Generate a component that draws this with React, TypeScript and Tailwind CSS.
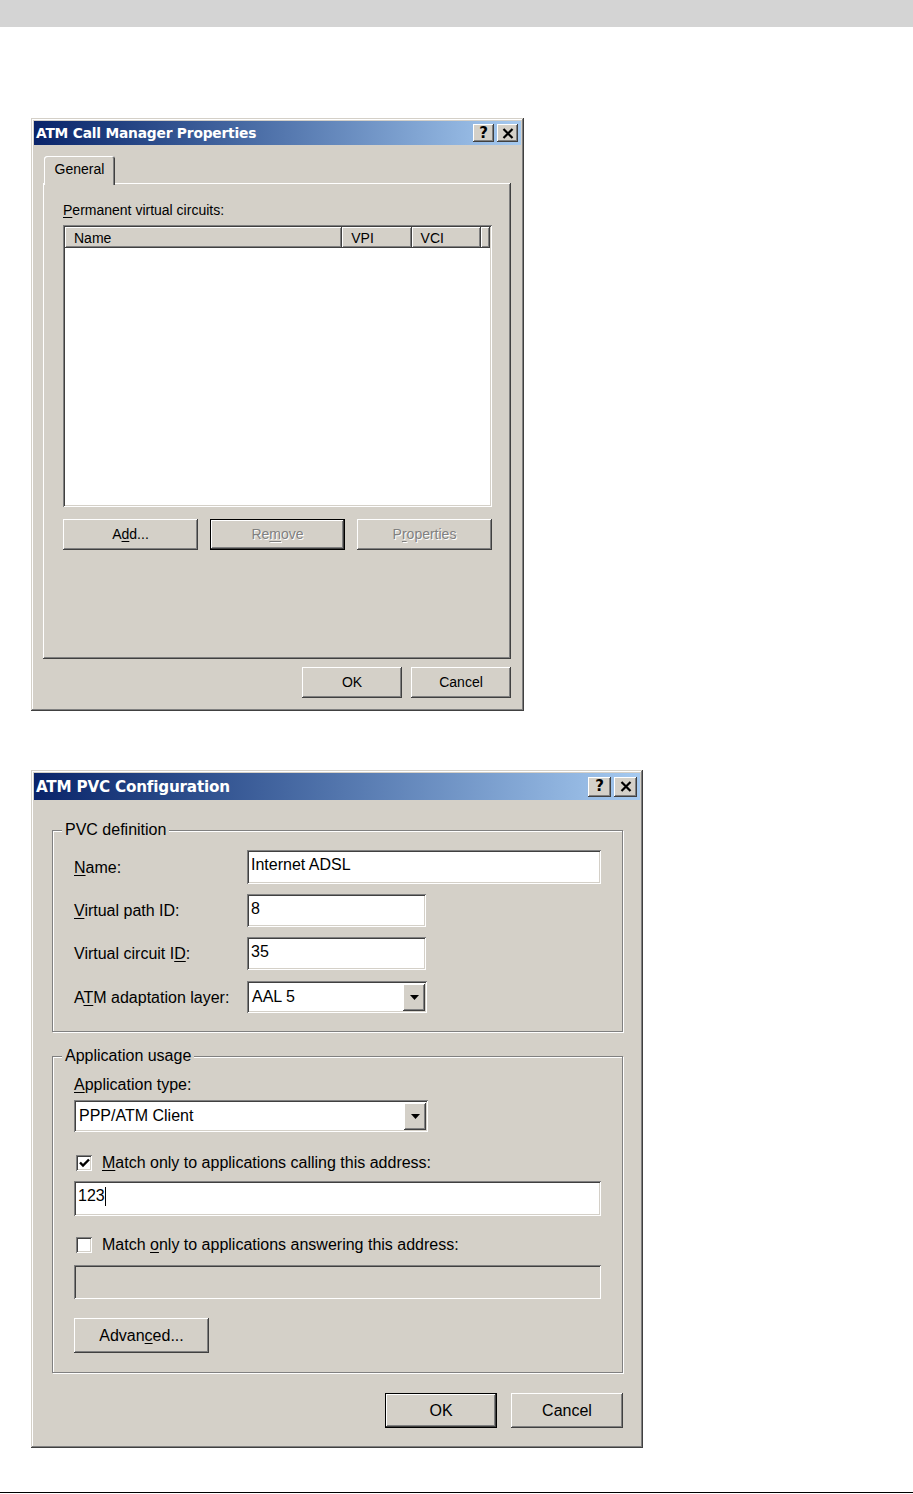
import React from 'react';

const frame =
  'shadow-[inset_-1px_-1px_#404040,inset_1px_1px_#d4d0c8,inset_-2px_-2px_#808080,inset_2px_2px_#ffffff]';
const raised =
  'shadow-[inset_-1px_-1px_#404040,inset_1px_1px_#ffffff,inset_-2px_-2px_#808080,inset_2px_2px_#d4d0c8]';
const sunken =
  'shadow-[inset_1px_1px_#808080,inset_-1px_-1px_#ffffff,inset_2px_2px_#404040,inset_-2px_-2px_#d4d0c8]';
const etched = 'border border-[#808080] shadow-[inset_1px_1px_#ffffff,1px_1px_#ffffff]';
const sans = "font-['Liberation_Sans',Arial,sans-serif]";
const disabledText = 'text-[#808080] [text-shadow:1px_1px_0_#ffffff]';

function CaptionButtons({ big }: { big?: boolean }) {
  const size = big ? 'w-[23px] h-[20px]' : 'w-[21px] h-[18px]';
  return (
    <div className="flex items-center gap-[3px]">
      <div className={`${size} ${raised} bg-[#d4d0c8] flex items-center justify-center`}>
        <span className="font-['DejaVu_Sans',sans-serif] font-bold text-black text-[15px] leading-none">?</span>
      </div>
      <div className={`${size} ${raised} bg-[#d4d0c8] flex items-center justify-center`}>
        <svg width="12" height="11" viewBox="0 0 12 11">
          <path d="M1.5 1 L10.5 10 M10.5 1 L1.5 10" stroke="#000" strokeWidth="2.2" />
        </svg>
      </div>
    </div>
  );
}

function TitleBar({ title, big }: { title: string; big?: boolean }) {
  return (
    <div
      className={`flex items-center justify-between bg-gradient-to-r from-[#0a246a] to-[#a6caf0] pl-[2px] pr-[3px] ${
        big ? 'h-[27px]' : 'h-[24px]'
      }`}
    >
      <span
        className={`font-['DejaVu_Sans',sans-serif] font-bold text-white tracking-[-0.2px] pt-[1px] ${
          big ? 'text-[15.2px]' : 'text-[13.8px]'
        }`}
      >
        {title}
      </span>
      <CaptionButtons big={big} />
    </div>
  );
}

function Btn({
  className,
  children,
  isDefault,
  disabled,
}: {
  className: string;
  children: React.ReactNode;
  isDefault?: boolean;
  disabled?: boolean;
}) {
  return (
    <div
      className={`${className} ${raised} bg-[#d4d0c8] flex items-center justify-center ${
        isDefault ? 'border border-black' : ''
      } ${disabled ? disabledText : 'text-black'}`}
    >
      <span>{children}</span>
    </div>
  );
}

function Field({ className, children }: { className: string; children?: React.ReactNode }) {
  return (
    <div className={`${className} ${sunken} bg-white flex items-start pl-[4px] pt-[5px] leading-[20px] text-black`}>
      {children}
    </div>
  );
}

function Combo({ className, value }: { className: string; value: string }) {
  return (
    <div className={`${className} ${sunken} bg-white flex items-center justify-between pl-[5px] pr-[2px] text-black`}>
      <span>{value}</span>
      <div className={`w-[22px] h-[27px] ${raised} bg-[#d4d0c8] flex items-center justify-center`}>
        <svg width="9" height="5" viewBox="0 0 9 5">
          <path d="M0 0 H9 L4.5 5 Z" fill="#000" />
        </svg>
      </div>
    </div>
  );
}

function CheckBox({ checked }: { checked?: boolean }) {
  return (
    <div className={`w-[16px] h-[16px] ${sunken} bg-white flex items-center justify-center`}>
      {checked && (
        <svg width="11" height="10" viewBox="0 0 11 10">
          <path d="M1 4.5 L4 7.5 L10 1.5" stroke="#000" strokeWidth="2.4" fill="none" />
        </svg>
      )}
    </div>
  );
}

function HeaderCell({ className, label }: { className: string; label?: string }) {
  return (
    <div className={`${className} h-[21px] ${raised} bg-[#d4d0c8] flex items-center pl-[9px] pt-[1px] text-black`}>
      {label}
    </div>
  );
}

function CallManagerDialog() {
  return (
    <div className={`w-[493px] h-[593px] bg-[#d4d0c8] p-[3px] flex flex-col ${frame} ${sans} text-[14px]`}>
      <TitleBar title="ATM Call Manager Properties" />
      <div className="flex flex-col pl-[9px] pr-[10px]">
        <div
          className="relative z-10 mt-[11px] ml-[1px] w-[71px] h-[29px] -mb-[2px] bg-[#d4d0c8] rounded-t-[3px] shadow-[inset_1px_1px_#ffffff,inset_-1px_0_#404040,inset_-2px_0_#808080] flex items-center justify-center pb-[2px] text-black"
        >
          General
        </div>
        <div className={`h-[476px] ${raised} bg-[#d4d0c8] pl-[20px] pt-[19px] flex flex-col`}>
          <div className="leading-[16px] text-black">
            <u className="underline-offset-2">P</u>ermanent virtual circuits:
          </div>
          <div className={`mt-[7px] w-[429px] h-[282px] ${sunken} bg-white p-[2px]`}>
            <div className="flex">
              <HeaderCell className="w-[280px]" label="Name" />
              <HeaderCell className="w-[70px]" label="VPI" />
              <HeaderCell className="w-[70px]" label="VCI" />
              <HeaderCell className="w-[5px]" />
            </div>
          </div>
          <div className="mt-[12px] w-[429px] flex justify-between">
            <Btn className="w-[135px] h-[31px]">
              A<u className="underline-offset-2">d</u>d...
            </Btn>
            <Btn className="w-[135px] h-[31px]" isDefault disabled>
              Re<u className="underline-offset-2">m</u>ove
            </Btn>
            <Btn className="w-[135px] h-[31px]" disabled>
              P<u className="underline-offset-2">r</u>operties
            </Btn>
          </div>
        </div>
        <div className="mt-[8px] flex justify-end gap-[9px]">
          <Btn className="w-[100px] h-[31px]">OK</Btn>
          <Btn className="w-[100px] h-[31px]">Cancel</Btn>
        </div>
      </div>
    </div>
  );
}

function Row({ label, mt, children }: { label: React.ReactNode; mt: string; children: React.ReactNode }) {
  return (
    <div className={`flex items-center ${mt}`}>
      <div className="w-[173px] text-black pt-[1px]">{label}</div>
      {children}
    </div>
  );
}

function PvcDialog() {
  return (
    <div className={`w-[612px] h-[678px] bg-[#d4d0c8] p-[3px] flex flex-col ${frame} ${sans} text-[16px] leading-[18px]`}>
      <TitleBar title="ATM PVC Configuration" big />
      <div className="flex flex-col pl-[18px] pr-[17px]">
        <fieldset className={`mt-[21px] ${etched} p-0 m-0`}>
          <legend className="ml-[9px] px-[3px] bg-[#d4d0c8] text-black leading-[18px]">PVC definition</legend>
          <div className="pl-[21px] pt-[11px] pb-[18px]">
            <Row label={<><u className="underline-offset-2">N</u>ame:</>} mt="">
              <Field className="w-[354px] h-[34px]">Internet ADSL</Field>
            </Row>
            <Row label={<><u className="underline-offset-2">V</u>irtual path ID:</>} mt="mt-[10px]">
              <Field className="w-[179px] h-[33px]">8</Field>
            </Row>
            <Row label={<>Virtual circuit I<u className="underline-offset-2">D</u>:</>} mt="mt-[10px]">
              <Field className="w-[179px] h-[33px]">35</Field>
            </Row>
            <Row label={<>A<u className="underline-offset-2">T</u>M adaptation layer:</>} mt="mt-[11px]">
              <Combo className="w-[180px] h-[32px]" value="AAL 5" />
            </Row>
          </div>
        </fieldset>

        <fieldset className={`mt-[15px] ${etched} p-0 m-0`}>
          <legend className="ml-[9px] px-[3px] bg-[#d4d0c8] text-black leading-[18px]">Application usage</legend>
          <div className="pl-[21px] pr-[21px] pt-[11px] pb-[19px] flex flex-col items-start">
            <div className="text-black">
              <u className="underline-offset-2">A</u>pplication type:
            </div>
            <Combo className="mt-[6px] w-[354px] h-[32px]" value="PPP/ATM Client" />
            <div className="mt-[22px] h-[18px] flex items-center gap-[10px] pl-[2px]">
              <CheckBox checked />
              <span className="text-black">
                <u className="underline-offset-2">M</u>atch only to applications calling this address:
              </span>
            </div>
            <Field className="mt-[9px] w-[527px] h-[35px]">
              <span>123</span>
              <span className="mt-[1px] w-px h-[19px] bg-black" />
            </Field>
            <div className="mt-[20px] h-[18px] flex items-center gap-[10px] pl-[2px]">
              <CheckBox />
              <span className="text-black">
                Match <u className="underline-offset-2">o</u>nly to applications answering this address:
              </span>
            </div>
            <div className={`mt-[11px] w-[527px] h-[34px] ${sunken} bg-[#d4d0c8]`} />
            <Btn className="mt-[19px] w-[135px] h-[35px]">
              Advan<u className="underline-offset-2">c</u>ed...
            </Btn>
          </div>
        </fieldset>

        <div className="mt-[20px] flex justify-end gap-[14px]">
          <Btn className="w-[112px] h-[35px]" isDefault>
            OK
          </Btn>
          <Btn className="w-[112px] h-[35px]">Cancel</Btn>
        </div>
      </div>
    </div>
  );
}

export default function App() {
  return (
    <div className="w-[913px] h-[1494px] bg-white flex flex-col">
      <div className="h-[27px] bg-[#d4d4d4]" />
      <div className="pl-[31px] flex flex-col">
        <div className="mt-[91px]">
          <CallManagerDialog />
        </div>
        <div className="mt-[59px]">
          <PvcDialog />
        </div>
      </div>
      <div className="flex-1" />
      <div className="h-px bg-black" />
      <div className="h-px" />
    </div>
  );
}
